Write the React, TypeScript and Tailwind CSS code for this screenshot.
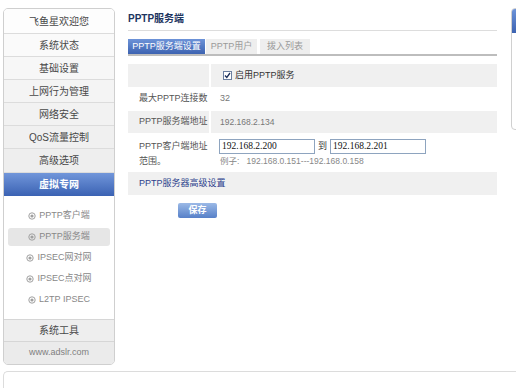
import React from "react";

const menu = [
  { label: "飞鱼星欢迎您", bg: "bg-[#fdfdfd]", h: "h-[25px]" },
  { label: "系统状态", bg: "bg-[#fafafa]", h: "h-[23px]" },
  { label: "基础设置", bg: "bg-[#f7f7f7]", h: "h-[23px]" },
  { label: "上网行为管理", bg: "bg-[#f4f4f4]", h: "h-[23px]" },
  { label: "网络安全", bg: "bg-[#f2f2f2]", h: "h-[23px]" },
  { label: "QoS流量控制", bg: "bg-[#f0f0f0]", h: "h-[23px]" },
  { label: "高级选项", bg: "bg-[#eeeeee]", h: "h-[24px]" },
];

const subItems = ["PPTP客户端", "PPTP服务端", "IPSEC网对网", "IPSEC点对网", "L2TP IPSEC"];

function Bullet() {
  return (
    <svg width="8" height="8" viewBox="0 0 8 8" className="mr-[3px] shrink-0">
      <circle cx="4" cy="4" r="3.2" fill="none" stroke="#a0a0a0" strokeWidth="1" />
      <circle cx="4" cy="4" r="1.6" fill="#a0a0a0" />
    </svg>
  );
}

function Sidebar() {
  return (
    <aside className="ml-[3px] mt-[8px] w-[112px] shrink-0 overflow-hidden rounded-[5px] border border-[#cfcfcf] text-[10px] text-[#484848]">
      {menu.map((m) => (
        <div
          key={m.label}
          className={`flex items-center justify-center border-b border-[#dcdcdc] ${m.bg} ${m.h}`}
        >
          {m.label}
        </div>
      ))}
      <div className="flex h-[23px] items-center justify-center bg-gradient-to-b from-[#7196da] to-[#3b62b3] font-bold text-white">
        虚拟专网
      </div>
      <div className="flex flex-col gap-[3px] bg-white px-[4px] pb-[10px] pt-[11px] text-[9px] text-[#888]">
        {subItems.map((s) => (
          <div
            key={s}
            className={`flex h-[18px] items-center justify-center rounded-[3px] ${
              s === "PPTP服务端" ? "bg-[#e6e6e6]" : ""
            }`}
          >
            <Bullet />
            {s}
          </div>
        ))}
      </div>
      <div className="flex h-[23px] items-center justify-center border-t border-b border-[#d6d6d6] bg-[#eeeeee]">
        系统工具
      </div>
      <div className="flex h-[22px] items-center justify-center bg-[#ebebeb] text-[9px] text-[#808080]">
        www.adslr.com
      </div>
    </aside>
  );
}

function Input({ value }: { value: string }) {
  return (
    <div className="flex h-[15px] w-[96px] items-center border border-[#8ea4bf] bg-white pl-[2px] font-['Liberation_Serif','Noto_Sans_CJK_SC',serif] text-[9.5px] text-[#111]">
      {value}
    </div>
  );
}

function Main() {
  return (
    <main className="ml-[13px] w-[369px] shrink-0">
      <div className="h-[31px] border-b border-[#dddddd] pt-[12px] text-[10px] font-bold leading-[14px] text-[#1d355f]">
        PPTP服务端
      </div>
      <div className="mt-[8px] flex h-[15px] text-[9px]">
        <div className="flex w-[77px] items-center justify-center bg-gradient-to-b from-[#6d93d8] to-[#3d63b1] text-white">
          PPTP服务端设置
        </div>
        <div className="ml-[1px] flex w-[51px] items-center justify-center bg-[#eeeeee] text-[#9a9a9a]">
          PPTP用户
        </div>
        <div className="ml-[3px] flex w-[50px] items-center justify-center bg-[#eeeeee] text-[#9a9a9a]">
          拨入列表
        </div>
      </div>
      <div className="h-[2px] bg-[#bdbdbd]" />

      <div className="mt-[8px] text-[9px] text-[#555]">
        <div className="flex h-[23px] bg-[#f0f0f0]">
          <div className="w-[81px]" />
          <div className="w-[2px] bg-white" />
          <div className="flex flex-1 items-center pl-[12px] text-[#333]">
            <span className="mr-[3px] flex h-[9px] w-[9px] items-center justify-center border border-[#6b7fa0] bg-white">
              <svg width="7" height="7" viewBox="0 0 7 7">
                <path d="M1 3.5 L2.8 5.5 L6 1" fill="none" stroke="#1c2f5a" strokeWidth="1.3" />
              </svg>
            </span>
            启用PPTP服务
          </div>
        </div>
        <div className="flex h-[24px] items-center bg-white">
          <div className="w-[83px] pl-[11px]">最大PPTP连接数</div>
          <div className="pl-[9px] text-[#777]">32</div>
        </div>
        <div className="flex h-[22px] bg-[#f0f0f0]">
          <div className="flex w-[81px] items-center pl-[11px]">PPTP服务端地址</div>
          <div className="w-[2px] bg-white" />
          <div className="flex items-center pl-[9px] text-[8.5px] text-[#777]">192.168.2.134</div>
        </div>
        <div className="flex h-[39px] bg-white">
          <div className="w-[83px] pl-[11px] pt-[6px] leading-[15px]">
            PPTP客户端地址
            <br />
            范围。
          </div>
          <div className="pl-[8px] pt-[6px]">
            <div className="flex items-center">
              <Input value="192.168.2.200" />
              <span className="mx-[3px] text-[#333]">到</span>
              <Input value="192.168.2.201" />
            </div>
            <div className="pl-[1px] leading-[14px] text-[8.5px] text-[#888]">
              例子:&nbsp;&nbsp;&nbsp;192.168.0.151---192.168.0.158
            </div>
          </div>
        </div>
        <div className="flex h-[23px] items-center bg-[#f0f0f0] pl-[11px] text-[#2c3f8c]">
          PPTP服务器高级设置
        </div>
      </div>

      <button className="ml-[50px] mt-[8px] flex h-[15px] w-[39px] items-center justify-center rounded-[2px] bg-gradient-to-b from-[#9bb9e6] to-[#5780c8] text-[9px] font-bold text-white">
        保存
      </button>
    </main>
  );
}

export default function App() {
  return (
    <div className="h-[388px] w-[516px] overflow-hidden bg-white font-['Liberation_Sans','Noto_Sans_CJK_SC',sans-serif]">
      <div className="flex items-start">
        <Sidebar />
        <Main />
        <div className="ml-[14px] mt-[8px] h-[122px] w-[20px] shrink-0 overflow-hidden rounded-[4px] border border-[#d0d0d0]">
          <div className="h-[24px] bg-gradient-to-b from-[#6d93d8] to-[#3d63b1]" />
        </div>
      </div>
      <div className="ml-[3px] mt-[6px] h-[20px] rounded-tl-[5px] border-l border-t border-[#dcdcdc]" />
    </div>
  );
}
